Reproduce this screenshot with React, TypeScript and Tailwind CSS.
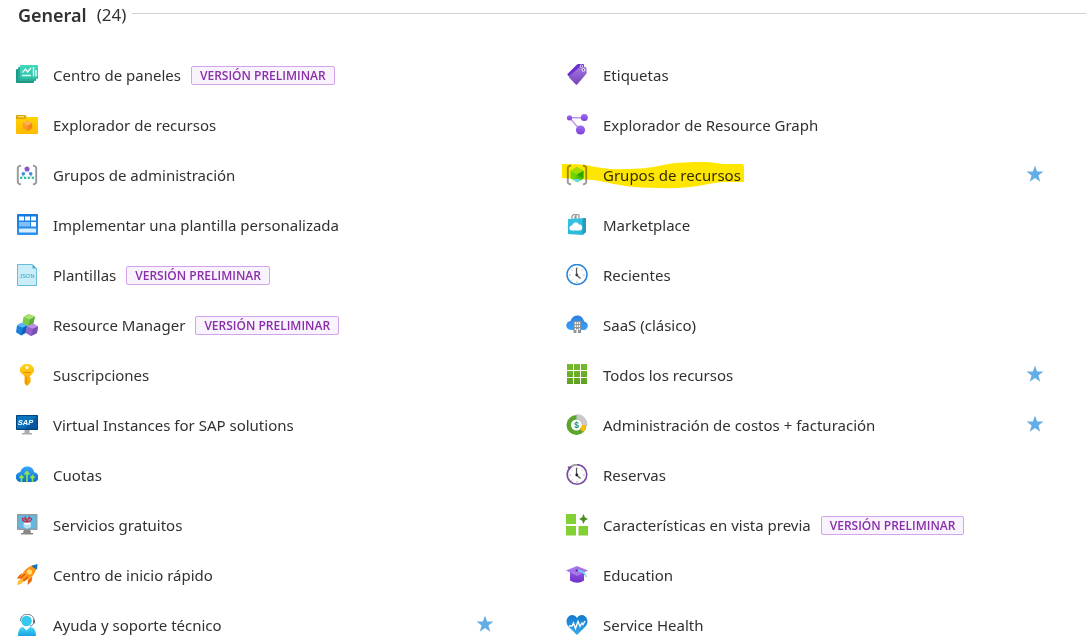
import type { ReactNode } from "react";

type Service = {
  name: string;
  icon: ReactNode;
  preview?: boolean;
  favorite?: boolean;
  highlighted?: boolean;
};

function Icon({ children }: { children: ReactNode }) {
  return (
    <svg viewBox="0 0 22 22" className="size-[22px] shrink-0" aria-hidden="true">
      {children}
    </svg>
  );
}

function Gradient({ id, from, to }: { id: string; from: string; to: string }) {
  return (
    <defs>
      <linearGradient id={id} x1="0" y1="0" x2="0" y2="1">
        <stop offset="0" stopColor={from} />
        <stop offset="1" stopColor={to} />
      </linearGradient>
    </defs>
  );
}

const dashboards = (
  <Icon>
    <Gradient id="dash" from="#42d9bd" to="#2ebfa5" />
    <rect x="0" y="5" width="18" height="14" rx="1" fill="#1f9885" />
    <rect x="2" y="3" width="18" height="14" rx="1" fill="#29ad98" />
    <rect x="4" y="1" width="18" height="14" rx="1" fill="url(#dash)" />
    <path d="M6.500 8.500 9.500 5l2 3 3.500-4" fill="none" stroke="#fff" strokeWidth="1.300" />
    <path d="M6 11.500h9M17.500 3v9.500M20 6v6.500" stroke="#d5fff5" strokeWidth="1.500" />
  </Icon>
);

const resourceExplorer = (
  <Icon>
    <Gradient id="folder" from="#ffd400" to="#ffb900" />
    <path d="M0 2a1 1 0 0 1 1-1h8l2 2-2 3H0z" fill="#dfa500" />
    <path d="M2 2.800h6" stroke="#fff0b0" strokeWidth="1" />
    <path d="M0 5h9l2-2h10.500a.5.5 0 0 1 .5.5V19a1 1 0 0 1-1 1H1a1 1 0 0 1-1-1z" fill="url(#folder)" />
    <path d="m11.500 6.500 4.700 2.500v5.200L11.500 17l-4.700-2.800V9z" fill="#fa9a2c" />
    <path d="m6.800 9 4.700-2.500L16.200 9l-4.700 2.700z" fill="#ffb34d" />
    <path d="M11.500 11.700 16.200 9v5.200L11.500 17z" fill="#ef7100" opacity=".5" />
  </Icon>
);

const managementGroups = (
  <Icon>
    <path d="M5 1.300 2.800 2.300Q1.800 2.800 1.800 4v14q0 1.200 1 1.700L5 20.700M17 1.300l2.200 1q1 .5 1 1.700v14q0 1.200-1 1.700l-2.200 1" fill="none" stroke="#999" strokeWidth="1.900" />
    <path d="M11 6 7 10.500M11 6l4 4.500M7 10.500 5 14.500M7 10.500l2 4M15 10.500l-2 4M15 10.500l2 4" stroke="#b9c2d9" strokeWidth=".8" />
    <circle cx="11" cy="5" r="2.500" fill="#8a55cc" />
    <circle cx="7.300" cy="9.800" r="1.800" fill="#3c91e6" />
    <circle cx="14.700" cy="9.800" r="1.800" fill="#3c91e6" />
    <path d="M4 12.700h2.300V15H4zM8 12.700h2.300V15H8zM11.700 12.700H14V15h-2.300zM15.700 12.700H18V15h-2.300z" fill="#31c4ad" />
  </Icon>
);

const customTemplate = (
  <Icon>
    <Gradient id="deploy" from="#1479dc" to="#2c93ef" />
    <rect x="1" y="0" width="21" height="21" rx="1" fill="url(#deploy)" />
    <path d="M3 2.500h5v4H3zM9 2.500h5v4H9zM15 2.500h5v4h-5zM15 8h5v4.500h-5z" fill="#fff" />
    <path d="M3 8h11v4.500H3z" fill="#83bff7" />
    <path d="M3 14.500h17v4H3z" fill="#d8edff" />
  </Icon>
);

const templates = (
  <Icon>
    <path d="M1.500.5h15l4 4v17h-19z" fill="#c9eef9" stroke="#65bddb" />
    <path d="M16.500.5v4h4z" fill="#56abc9" />
    <text x="11" y="13.500" textAnchor="middle" fontSize="5.600" fontFamily="Liberation Sans, sans-serif" fill="#329cc3">JSON</text>
  </Icon>
);

const resourceManager = (
  <Icon>
    <path d="m12.500 0 6.500 2.500-1.700 7L12 12 6.300 9.500 7.500 3z" fill="#7ccc4c" />
    <path d="m12.500 0 6.500 2.500-5 3L7.500 3z" fill="#a9e272" />
    <path d="m14 5.500 5-3-1.700 7L12 12z" fill="#5fae36" />
    <path d="m5 9 6 2.500-1 7L5 21.500l-5-3.300 1-6.700z" fill="#1b80d8" />
    <path d="m5 9 6 2.500-4 2.300-6-2.300z" fill="#5bb8f5" />
    <path d="m7 13.800 4-2.300-1 7L5 21.500z" fill="#0c62b8" />
    <path d="m17 9.500 5 3-1 6.500-6 3-5.500-3 1.500-6.500z" fill="#9264cc" />
    <path d="m17 9.500 5 3-5.200 2.300L11 12.500z" fill="#bb90e8" />
    <path d="M16.800 14.800 22 12.500 21 19l-6 3z" fill="#7850b5" />
  </Icon>
);

const subscriptions = (
  <Icon>
    <Gradient id="key" from="#ffd21a" to="#f8a400" />
    <path d="M9 0h4q1 0 1.700.7l2.600 2.600q.7.700.7 1.600v2.200q0 .9-.7 1.600L14 12v1.500l1.200 1.200-1.200 1.300 1.200 1.300-1.200 1.200V19l-3 3-2.500-2.500V12L4.700 8.700Q4 8 4 7.100V4.900q0-.9.700-1.600L7.300.7Q8 0 9 0z" fill="url(#key)" />
    <circle cx="11" cy="3.500" r="1.700" fill="#fff7cf" />
    <path d="M7.500 8.500h7M10.200 12.500v7" stroke="#e18b00" strokeWidth="1.100" />
  </Icon>
);

const sap = (
  <Icon>
    <path d="M8.500 16h5v3H16v1.500H6V19h2.500z" fill="#aaa" />
    <rect y="1" width="22" height="15" rx=".7" fill="#00457f" />
    <path d="M1 2h20L9 14.500H1z" fill="#0872bd" />
    <path d="M21 2v12.500H9z" fill="#0758a2" />
    <text x="9.500" y="10.500" textAnchor="middle" fontSize="7.500" fontFamily="Liberation Sans, sans-serif" fontWeight="700" fontStyle="italic" fill="#fff">SAP</text>
  </Icon>
);

const quotas = (
  <Icon>
    <Gradient id="quota" from="#3aa7ff" to="#0870cc" />
    <path d="M5 18a5 5 0 0 1-.5-10C5 4.500 8 2.500 11.500 2.500c3.800 0 6.200 2.500 6.600 5.800A4.800 4.800 0 0 1 17 18z" fill="url(#quota)" />
    <path d="M5.500 18v-5M11 18V8.500M16.500 18v-5M3.500 14l2-2.300 2 2.300M8.500 10.500 11 7.500l2.500 3M14.500 14l2-2.300 2 2.300" fill="none" stroke="#8ee04c" strokeWidth="1.700" />
  </Icon>
);

const freeServices = (
  <Icon>
    <path d="M8 15h6l1 4h2v1.500H5V19h2z" fill="#888" />
    <rect x="1" y="0" width="20.500" height="16" rx=".7" fill="#999" />
    <path d="M2.300 1.300h18v13.400h-18z" fill="#61b8e2" />
    <path d="m11 7.500 4 2V13l-4 1.700L7.500 13V9.500z" fill="#b9e1f3" />
    <path d="m7.500 9.500 3.500-2 4 2-4 1.700z" fill="#fff" />
    <path d="M11 8Q6 7.500 6.500 4.500q3-.5 4.500 3Q12 3 15.500 4.500q0 3-4.500 3.500M9 2.500l2 5 2.500-5" fill="none" stroke="#c0304e" strokeWidth="1.300" />
  </Icon>
);

const quickstart = (
  <Icon>
    <path d="m6 9-3.500 3L1 15l4-1zM12 16l-.5 5 4-3.500 1-5z" fill="#e86a0c" />
    <path d="M5.500 14.500 2 17l-1 4 4-1 3-3z" fill="#ffbf38" />
    <path d="M21 .7Q13 1 8 7.300l-4 6 4 4.200 6.500-3.500Q20.500 8.500 21 .7z" fill="#ff9416" />
    <path d="M21.500 0 21 5.500Q18 5 15.500 1.800z" fill="#1672b6" />
    <circle cx="13.500" cy="8" r="2.200" fill="#ffdc68" stroke="#fff0b0" strokeWidth=".7" />
    <path d="m4 14.500 5-4.500M7.500 17l4-4" stroke="#d75b05" strokeWidth="1.300" />
  </Icon>
);

const support = (
  <Icon>
    <Gradient id="person" from="#43d8f8" to="#18a3e1" />
    <path d="M4.500 7C4.500 2.500 7.500.3 11 .3c4.700 0 7.500 3 7 7.200-.3 2.800-2 4.500-4 4.500" fill="none" stroke="#687780" strokeWidth="1" />
    <circle cx="10.500" cy="7" r="5.300" fill="#35c9ed" />
    <path d="M2 22c0-5 1.800-9 5-9l3.500 3.500L14 13c4.200 0 6 4 6 9z" fill="url(#person)" />
    <rect x="17" y="5.500" width="2" height="4" rx="1" fill="#607078" />
  </Icon>
);

const tags = (
  <Icon>
    <Gradient id="tag" from="#a47ae4" to="#7642b9" />
    <path d="M11 .5Q11.500 0 12.300 0L17 0q1 0 1 1v3L6.500 15.500l-4.800-4.300q-.7-.7 0-1.400z" fill="#6d32ce" />
    <path d="M14 2.800q.4-.5 1.100-.4l4.400.7q.8.100.9.900l.3 4.800q0 .7-.5 1.200L11.200 20.500q-.7.700-1.400 0l-6.700-7q-.5-.6 0-1.200z" fill="url(#tag)" />
    <circle cx="15.500" cy="2.200" r="1.200" fill="#5b28ad" stroke="#fff" strokeWidth=".8" />
    <circle cx="17.500" cy="6" r="1.400" fill="#7940bd" stroke="#fff" strokeWidth=".9" />
  </Icon>
);

const resourceGraph = (
  <Icon>
    <Gradient id="graph" from="#a06ef0" to="#7a3fdb" />
    <path d="M3.500 3.800H18M3.500 3.800l10.500 12" stroke="#bd94ef" strokeWidth="1.400" />
    <circle cx="3.500" cy="3.800" r="2.600" fill="url(#graph)" />
    <circle cx="18.300" cy="3.500" r="3.500" fill="url(#graph)" />
    <circle cx="14.500" cy="16" r="4.600" fill="url(#graph)" />
  </Icon>
);

const resourceGroups = (
  <Icon>
    <path d="M5 1.300 2.800 2.300Q1.800 2.800 1.800 4v14q0 1.200 1 1.700L5 20.700M17 1.300l2.200 1q1 .5 1 1.700v14q0 1.200-1 1.700l-2.200 1" fill="none" stroke="#999" strokeWidth="1.900" />
    <path d="m11 3 6.500 3.700v7.800L11 18.300l-6.500-3.800V6.700z" fill="#6dee13" />
    <path d="M4.500 6.700 11 3l6.500 3.700L11 10.500z" fill="#a2f431" />
    <path d="m11 10.500 6.500-3.800v7.800L11 18.300z" fill="#28ba13" />
    <path d="m7.500 16.300 3.500-5.800 3.500 5.800-3.500 2z" fill="#62d9ee" />
    <path d="m11 10.500 6.500 4-3 1.800z" fill="#45d626" />
  </Icon>
);

const marketplace = (
  <Icon>
    <Gradient id="bag" from="#35c3e4" to="#2bb9db" />
    <path d="M6 5.500V2.500Q7.500-.5 10 1v4.500M9 5.500V2.500Q10.500-.5 13 1v4.500" fill="none" stroke="#999" strokeWidth="1.200" />
    <path d="m2 5 18-1V18l-3.500 3L2 20z" fill="url(#bag)" />
    <path d="m16.500 4.200 3.500-.2V18l-3.500 3z" fill="#269db9" />
    <path d="M6 16.500a2.500 2.500 0 0 1 0-5 3.700 3.700 0 0 1 7-1 3 3 0 0 1 .5 6z" fill="#fff" />
  </Icon>
);

const clockTicks = "M11 3v2M11 17v2M3 11h2M17 11h2M5.400 5.400l1 1M16.600 5.400l-1 1M5.400 16.600l1-1";

const recent = (
  <Icon>
    <circle cx="11" cy="10.500" r="10" fill="#fff" stroke="#2785d9" strokeWidth="1.500" />
    <path d={clockTicks} stroke="#aaa" strokeWidth=".9" />
    <path d="M10.500 4v7l4 3.500" fill="none" stroke="#555" strokeWidth="1.200" />
    <circle cx="10.800" cy="11" r="1.400" fill="#444" />
  </Icon>
);

const saas = (
  <Icon>
    <Gradient id="saas" from="#2f80e0" to="#37a2fa" />
    <path d="M5 16a4.500 4.500 0 0 1-.5-9C5.500 3.500 8 1.500 11.500 1.500c3.500 0 6 2.700 6.600 6A4.200 4.200 0 0 1 17 16z" fill="url(#saas)" />
    <path d="M7.500 7h7.500v12H7.500z" fill="#8f9297" />
    <path d="M8.700 8.300H10v1.700H8.700zM10.700 8.300H12v1.700h-1.300zM12.700 8.300H14v1.700h-1.300zM8.700 11.300H10V13H8.700zM10.700 11.300H12V13h-1.300zM12.700 11.300H14V13h-1.300zM8.700 14.300H10V16H8.700zM12.700 14.300H14V16h-1.300zM10.500 15H12v4h-1.500z" fill="#fff" />
  </Icon>
);

const allResources = (
  <Icon>
    <Gradient id="all" from="#76bc2d" to="#5ea11f" />
    <path d="M1 0h6v6H1zM8 0h6v6H8zM15 0h6v6h-6zM1 7h6v6H1zM8 7h6v6H8zM15 7h6v6h-6zM1 14h6v6H1zM8 14h6v6H8zM15 14h6v6h-6z" fill="url(#all)" />
  </Icon>
);

const costs = (
  <Icon>
    <circle cx="10.500" cy="11" r="7.800" fill="none" stroke="#5ca52c" strokeWidth="4.500" />
    <path d="M10.500 0a11 11 0 0 1 11 11H16a5.500 5.500 0 0 0-5.500-5.500z" fill="#c9c9c9" />
    <path d="M20.500 11a10 10 0 0 1-3.500 7l-3.200-3.500A5.500 5.500 0 0 0 16 11z" fill="#fabc09" />
    <text x="10.500" y="14" textAnchor="middle" fontSize="8.500" fontFamily="Liberation Sans, sans-serif" fontWeight="700" fill="#168b79">$</text>
  </Icon>
);

const reservations = (
  <Icon>
    <circle cx="11" cy="10.500" r="9.800" fill="#fff" stroke="#764ba0" strokeWidth="1.600" />
    <path d="M3 4.500A10 10 0 0 1 11 .9" fill="none" stroke="#a8a8a8" strokeWidth="1.800" />
    <path d="m1.500 2.500 4.500 0-3 4z" fill="#764ba0" />
    <path d={clockTicks} stroke="#aaa" strokeWidth=".9" />
    <path d="M10.500 4v7l4 3.500" fill="none" stroke="#555" strokeWidth="1.200" />
    <circle cx="10.800" cy="11" r="1.400" fill="#222" />
  </Icon>
);

const previewFeatures = (
  <Icon>
    <path d="M0 0h10v10H0zM0 12h10v9.500H0zM12.500 12H22v9.500h-9.500z" fill="#82d133" />
    <path d="m17.500 0 1.500 3.500L22 5l-3 1.500-1.500 3.500L16 6.500 13 5l3-1.500z" fill="#4c8c20" />
  </Icon>
);

const education = (
  <Icon>
    <Gradient id="edu" from="#8e51df" to="#7032c8" />
    <path d="M4 8h14v8.500q-6.500 4.500-14 0z" fill="url(#edu)" />
    <path d="m11 2 11 4.500-11 5.500L0 6.500z" fill="#a675ec" />
    <ellipse cx="11" cy="6.500" rx="1.500" ry="1" fill="#592ba9" />
    <path d="M12 6.500q7 1 8 6.500" fill="none" stroke="#65dded" strokeWidth="1.500" />
  </Icon>
);

const health = (
  <Icon>
    <Gradient id="heart" from="#1179cc" to="#3babed" />
    <path d="M11 21 2 12C-1 8 .8 1.500 6 1q3.300 0 5 3 1.700-3 5-3c5.200.5 7 7 4 11z" fill="url(#heart)" />
    <path d="M3 12h3l1.500-3 2 5.500L12 7.500l2 5L16 9l1 1.500 2-3.500" fill="none" stroke="#fff" strokeWidth="1.400" />
  </Icon>
);

const columns: Service[][] = [
  [
    { name: "Centro de paneles", icon: dashboards, preview: true },
    { name: "Explorador de recursos", icon: resourceExplorer },
    { name: "Grupos de administración", icon: managementGroups },
    { name: "Implementar una plantilla personalizada", icon: customTemplate },
    { name: "Plantillas", icon: templates, preview: true },
    { name: "Resource Manager", icon: resourceManager, preview: true },
    { name: "Suscripciones", icon: subscriptions },
    { name: "Virtual Instances for SAP solutions", icon: sap },
    { name: "Cuotas", icon: quotas },
    { name: "Servicios gratuitos", icon: freeServices },
    { name: "Centro de inicio rápido", icon: quickstart },
    { name: "Ayuda y soporte técnico", icon: support, favorite: true },
  ],
  [
    { name: "Etiquetas", icon: tags },
    { name: "Explorador de Resource Graph", icon: resourceGraph },
    { name: "Grupos de recursos", icon: resourceGroups, favorite: true, highlighted: true },
    { name: "Marketplace", icon: marketplace },
    { name: "Recientes", icon: recent },
    { name: "SaaS (clásico)", icon: saas },
    { name: "Todos los recursos", icon: allResources, favorite: true },
    { name: "Administración de costos + facturación", icon: costs, favorite: true },
    { name: "Reservas", icon: reservations },
    { name: "Características en vista previa", icon: previewFeatures, preview: true },
    { name: "Education", icon: education },
    { name: "Service Health", icon: health },
  ],
];

function Highlight() {
  return (
    <svg
      viewBox="0 0 184 28"
      className="pointer-events-none absolute top-[11px] -left-1 h-7 w-[184px] mix-blend-multiply"
      aria-hidden="true"
    >
      <path
        d="M0 3c9 0 16 0 24 1 14 3 25 5 38 4 15 0 26-1 39-4 15-3 28-3 41-3 8 0 15 2 22 2h16q2 0 2 3v15h-22c-11 1-21 4-32 5-18 2-38 1-56 0-14-1-27-5-41-7l-31-2z"
        fill="#ffe600"
      />
    </svg>
  );
}

function ServiceRow({ service }: { service: Service }) {
  return (
    <li className="relative flex h-[50px] items-center">
      <a href="#" className="flex min-w-0 items-center gap-[15px] whitespace-nowrap">
        {service.icon}
        <span>{service.name}</span>
      </a>
      {service.preview && (
        <span className="ml-2.5 shrink-0 rounded-xs border border-[#d3a4ec] bg-[#f9f3fd] px-2 font-['Open_Sans','Noto_Sans',sans-serif] text-[12px] leading-[17px] font-semibold whitespace-nowrap text-[#8b2eaa]">
          VERSIÓN PRELIMINAR
        </span>
      )}
      {service.favorite && (
        <button type="button" aria-label={`Quitar ${service.name} de favoritos`} className="ml-auto pb-0.5">
          <svg viewBox="0 0 18 18" className="size-[18px]" aria-hidden="true">
            <path d="m9 .5 2.100 6 6.400.1-5.100 3.900 1.900 6.200L9 13.100l-5.300 3.600 1.900-6.200L.5 6.600l6.400-.1z" fill="#63ade7" />
          </svg>
        </button>
      )}
      {service.highlighted && <Highlight />}
    </li>
  );
}

export default function App() {
  return (
    <main className="h-screen overflow-hidden bg-white font-['Noto_Sans','Open_Sans',sans-serif] text-[15px] text-[#323130]">
      <header className="flex h-[50px] items-start pl-[18px] leading-[30px]">
        <h2 className="text-[18px] font-semibold">General</h2>
        <span className="ml-2.5 text-[17px]">(24)</span>
        <span className="mt-[13px] ml-1.5 flex-1 border-t border-[#d2d0ce]" />
      </header>
      <div className="grid grid-cols-2 gap-x-[72px] pr-[42px] pl-4">
        {columns.map((services) => (
          <ul key={services[0].name}>
            {services.map((service) => (
              <ServiceRow key={service.name} service={service} />
            ))}
          </ul>
        ))}
      </div>
    </main>
  );
}
